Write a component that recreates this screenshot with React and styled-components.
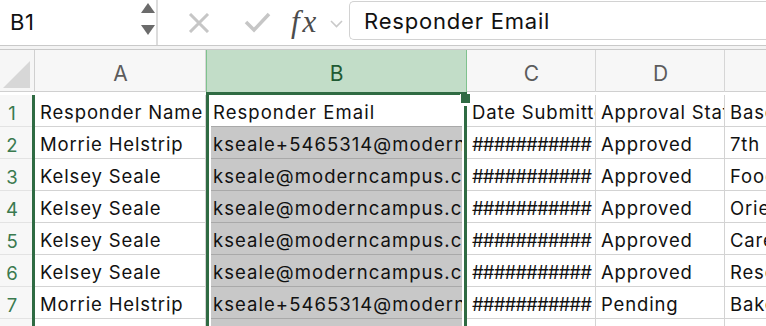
import React from 'react';
import styled, { createGlobalStyle } from 'styled-components';

const GREEN = '#2f6b43';

const GlobalStyle = createGlobalStyle`
  html, body { margin: 0; padding: 0; background: #fff; }
  body { font-family: Inter, "Liberation Sans", sans-serif; }
`;

const Window = styled.div`
  width: 766px;
  height: 326px;
  overflow: hidden;
  background: #fff;
  display: flex;
  flex-direction: column;
`;

const FormulaBar = styled.div`
  flex: none;
  box-sizing: border-box;
  height: 46px;
  display: flex;
  align-items: stretch;
  border-bottom: 1px solid #c9c9c9;
`;

const NameBox = styled.div`
  flex: none;
  width: 158px;
  border-right: 2px solid #dcdcdc;
  display: flex;
  justify-content: space-between;
  padding: 0 1px 0 10px;
  box-sizing: border-box;
  font-size: 22px;
  letter-spacing: 0.6px;
  color: #111;
`;

const NameText = styled.div`
  display: flex;
  align-items: center;
  padding-bottom: 2px;
`;

const Spinner = styled.div`
  display: flex;
  flex-direction: column;
  gap: 12px;
  padding-top: 3px;
`;

const IconSlot = styled.div`
  flex: none;
  display: flex;
  align-items: center;
  margin-left: ${p => p.$ml}px;
  padding-top: ${p => p.$pt || 0}px;
`;

const Fx = styled.span`
  display: inline-block;
  width: 30px;
  font-family: "Liberation Serif", "DejaVu Serif", serif;
  font-style: italic;
  font-size: 31px;
  letter-spacing: 3px;
  color: #4c4c4c;
  line-height: 1;
  padding-bottom: 3px;
  white-space: nowrap;
`;

const FormulaInput = styled.div`
  flex: 1;
  margin: 1px 0 0 6px;
  height: 39px;
  box-sizing: border-box;
  border: 1px solid #d2d2d2;
  border-right: none;
  border-radius: 5px 0 0 5px;
  padding-left: 14px;
  display: flex;
  align-items: center;
  font-size: 22px;
  letter-spacing: 0.8px;
  color: #111;
  white-space: nowrap;
`;

const Gap = styled.div`
  flex: none;
  height: 3px;
  background: #f3f3f3;
`;

const Sheet = styled.div`
  flex: none;
  display: grid;
  grid-template-columns: 35px 171px 261px 129px 129px 130px;
  grid-template-rows: 46px repeat(8, 32px);
`;

const Corner = styled.div`
  box-sizing: border-box;
  border-top: 1px solid #c9c9c9;
  border-bottom: 3px solid #fff;
  background: #f6f6f6;
  background-clip: padding-box;
  box-shadow: inset -1px 0 0 #d0d0d0, inset 0 -1px 0 #d0d0d0;
  display: flex;
  align-items: flex-end;
  justify-content: flex-end;
  padding: 0 5px 4px 0;
`;

const CornerMark = styled.div`
  width: 27px;
  height: 27px;
  background: #d7d7d7;
  clip-path: polygon(100% 0, 100% 100%, 0 100%);
`;

const ColHeader = styled.div`
  box-sizing: border-box;
  border-top: 1px solid #c9c9c9;
  border-bottom: 3px solid ${p => (p.$selected ? GREEN : '#fff')};
  background: ${p => (p.$selected ? '#c2ddc8' : '#f7f7f7')};
  background-clip: padding-box;
  box-shadow: ${p =>
    p.$selected
      ? 'inset 1px 0 0 #7fc28e, inset -1px 0 0 #7fc28e'
      : 'inset -1px 0 0 #d6d6d6, inset 0 -1px 0 #d0d0d0'};
  color: ${p => (p.$selected ? '#1f5a33' : '#5c5c5c')};
  font-size: 21px;
  display: flex;
  align-items: center;
  justify-content: center;
  padding-top: 4px;
`;

const RowHeader = styled.div`
  box-sizing: border-box;
  background: #f7f7f7;
  border-right: 3px solid ${GREEN};
  box-shadow: inset 0 -1px 0 #e3e3e3;
  color: #3a7a4f;
  font-size: 18.5px;
  line-height: 22px;
  display: flex;
  align-items: flex-end;
  justify-content: center;
  padding: 0 8px 3px 0;
`;

const Cell = styled.div`
  box-sizing: border-box;
  min-width: 0;
  border-right: 1px solid #d3d3d3;
  border-bottom: 1px solid #d3d3d3;
  padding: 0 0 3px 5px;
  display: flex;
  align-items: flex-end;
  white-space: nowrap;
  overflow: hidden;
  font-size: 18.5px;
  letter-spacing: ${p => (p.$hash ? '-0.9px' : '0.85px')};
  line-height: 22px;
  color: #111;
`;

const SelCell = styled.div`
  box-sizing: border-box;
  min-width: 0;
  position: relative;
  border-left: 3px solid ${GREEN};
  border-right: 3px solid ${GREEN};
  padding: 0 2px;
  display: flex;
  background: #fff;
`;

const SelFill = styled.div`
  flex: 1;
  min-width: 0;
  box-sizing: border-box;
  background: ${p => (p.$active ? '#fff' : '#c8c8c8')};
  border-bottom: 1px solid #a9a9a9;
  padding: 0 0 3px 2px;
  display: flex;
  align-items: flex-end;
  white-space: nowrap;
  overflow: hidden;
  font-size: 18.5px;
  letter-spacing: 1.05px;
  line-height: 22px;
  color: #111;
`;

const FillHandle = styled.div`
  position: absolute;
  left: 251px;
  top: -1px;
  width: 9px;
  height: 9px;
  background: ${GREEN};
  border-bottom: 3px solid #fff;
  border-left: 1px solid #fff;
`;

const columns = ['A', 'B', 'C', 'D', 'E'];

const rows = [
  ['Responder Name', 'Responder Email', 'Date Submitted', 'Approval Status', 'Base Location'],
  ['Morrie Helstrip', 'kseale+5465314@moderncampus.com', '###########', 'Approved', '7th Floor'],
  ['Kelsey Seale', 'kseale@moderncampus.com', '###########', 'Approved', 'Food Drive'],
  ['Kelsey Seale', 'kseale@moderncampus.com', '###########', 'Approved', 'Orientation'],
  ['Kelsey Seale', 'kseale@moderncampus.com', '###########', 'Approved', 'Career Fair'],
  ['Kelsey Seale', 'kseale@moderncampus.com', '###########', 'Approved', 'Research'],
  ['Morrie Helstrip', 'kseale+5465314@moderncampus.com', '###########', 'Pending', 'Bake Sale'],
  ['', '', '', '', ''],
];

const UpArrow = () => (
  <svg width="14" height="10" viewBox="0 0 14 10">
    <polygon points="7,0 14,10 0,10" fill="#6b6b6b" />
  </svg>
);
const DownArrow = () => (
  <svg width="14" height="10" viewBox="0 0 14 10">
    <polygon points="0,0 14,0 7,10" fill="#6b6b6b" />
  </svg>
);
const CancelIcon = () => (
  <svg width="22" height="20" viewBox="0 0 22 20">
    <path d="M2 1 L20 19 M20 1 L2 19" stroke="#c6c6c6" strokeWidth="3" fill="none" />
  </svg>
);
const CheckIcon = () => (
  <svg width="27" height="21" viewBox="0 0 27 21">
    <polyline points="2,10 10,18 25,2" stroke="#c6c6c6" strokeWidth="3.5" fill="none" />
  </svg>
);
const Chevron = () => (
  <svg width="13" height="8" viewBox="0 0 13 8">
    <polyline points="1,1 6.5,6.5 12,1" stroke="#c9c9c9" strokeWidth="1.6" fill="none" />
  </svg>
);

export default function App() {
  return (
    <Window>
      <GlobalStyle />
      <FormulaBar>
        <NameBox>
          <NameText>B1</NameText>
          <Spinner>
            <UpArrow />
            <DownArrow />
          </Spinner>
        </NameBox>
        <IconSlot $ml={30} $pt={1}><CancelIcon /></IconSlot>
        <IconSlot $ml={34}><CheckIcon /></IconSlot>
        <IconSlot $ml={20}><Fx>fx</Fx></IconSlot>
        <IconSlot $ml={9} $pt={2}><Chevron /></IconSlot>
        <FormulaInput>Responder Email</FormulaInput>
      </FormulaBar>
      <Gap />
      <Sheet>
        <Corner><CornerMark /></Corner>
        {columns.map(c => (
          <ColHeader key={c} $selected={c === 'B'}>{c}</ColHeader>
        ))}
        {rows.map((r, i) => (
          <React.Fragment key={i}>
            <RowHeader>{i < 7 ? i + 1 : ''}</RowHeader>
            <Cell>{r[0]}</Cell>
            <SelCell>
              <SelFill $active={i === 0}>{r[1]}</SelFill>
              {i === 0 && <FillHandle />}
            </SelCell>
            <Cell $hash={r[2].startsWith('#')}>{r[2]}</Cell>
            <Cell>{r[3]}</Cell>
            <Cell>{r[4]}</Cell>
          </React.Fragment>
        ))}
      </Sheet>
    </Window>
  );
}
